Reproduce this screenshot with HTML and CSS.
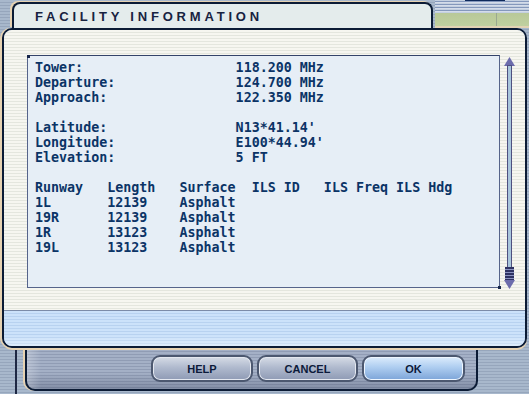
FILE: index.html
```html
<!DOCTYPE html>
<html lang="en">
<head>
  <meta charset="UTF-8" />
  <title>Facility Information</title>
  <link rel="stylesheet" href="styles.css">
</head>
<body>
  <div class="screen">

    <!-- Title tab and scenery behind it -->
    <div class="top">
      <div class="tab">
        <h1 class="tab-title">FACILITY INFORMATION</h1>
      </div>
      <div class="scenery"></div>
    </div>

    <!-- Main dialog -->
    <section class="dialog">
      <div class="content">
        <div class="info-box">
<pre class="info">Tower:                   118.200 MHz
Departure:               124.700 MHz
Approach:                122.350 MHz

Latitude:                N13*41.14'
Longitude:               E100*44.94'
Elevation:               5 FT

Runway   Length   Surface  ILS ID   ILS Freq ILS Hdg
1L       12139    Asphalt
19R      12139    Asphalt
1R       13123    Asphalt
19L      13123    Asphalt</pre>
        </div>
        <svg class="scroll" width="14" height="232" viewBox="0 0 14 232">
          <polygon points="1,9 6.5,0 12,9" fill="#6c6cac" />
          <rect x="4.5" y="8.5" width="4" height="202" fill="#a9c6dc" stroke="#4e5080" />
          <rect x="2" y="210" width="9" height="13" fill="#2e3262" />
          <g stroke="#8a92c0" stroke-width="1">
            <line x1="2" y1="212.5" x2="11" y2="212.5" />
            <line x1="2" y1="215.5" x2="11" y2="215.5" />
            <line x1="2" y1="218.5" x2="11" y2="218.5" />
            <line x1="2" y1="221.5" x2="11" y2="221.5" />
          </g>
          <polygon points="1,223 12,223 6.5,232" fill="#6c6cac" />
        </svg>
      </div>
      <div class="band"></div>
    </section>

    <!-- Button bar -->
    <div class="footer">
      <button class="btn btn-help">HELP</button>
      <button class="btn btn-cancel">CANCEL</button>
      <button class="btn btn-ok">OK</button>
    </div>

  </div>
</body>
</html>
```
FILE: styles.css
```css
body {
  margin: 0;
  background: #a4b4c8;
}

.screen {
  width: 529px;
  height: 394px;
  overflow: hidden;
  background:
    linear-gradient(to right, transparent 15px, #1e2844 15px, #1e2844 17px, transparent 17px) 0 348px / 100% 46px no-repeat,
    repeating-linear-gradient(#a8b8cc 0, #a8b8cc 2px, #96a6bc 2px, #96a6bc 3px);
}

/* Top row */
.top {
  display: flex;
  height: 28px;
}

.tab {
  box-sizing: border-box;
  width: 421px;
  margin: 2px 0 0 12px;
  border: 2px solid #0b1b35;
  border-bottom: none;
  border-radius: 8px 8px 0 0;
  background: #e4ecec;
  box-shadow: -2px -1px 0 #e6d2b2;
}

.tab-title {
  margin: 0;
  padding-left: 21px;
  font-family: "Liberation Sans", Arial, sans-serif;
  font-size: 13px;
  font-weight: bold;
  line-height: 25px;
  letter-spacing: 3.8px;
  color: #172240;
}

.scenery {
  flex: 1;
  margin-left: 2px;
  background:
    linear-gradient(#0e2a5c, #0e2a5c) 30px 0 / 40px 1px no-repeat,
    linear-gradient(to right, transparent 61px, #9aa890 61px, #9aa890 62px, transparent 62px) 0 13px / 100% 13px no-repeat,
    linear-gradient(#b8c898, #c0d0a0) 0 13px / 100% 13px no-repeat,
    linear-gradient(#e2d2b4, #e2d2b4) 0 26px / 100% 2px no-repeat,
    repeating-linear-gradient(#c4d0e0 0, #c4d0e0 1px, #8498bc 1px, #8498bc 2px, #d4dcea 2px, #d4dcea 3px);
}

/* Dialog */
.dialog {
  position: relative;
  z-index: 1;
  box-sizing: border-box;
  width: 525px;
  height: 320px;
  margin-left: 2px;
  display: flex;
  flex-direction: column;
  border: 2px solid #0b1b35;
  border-radius: 10px;
  overflow: hidden;
  box-shadow: -2px 0 0 #e6d2b2, 0 2px 0 #e6d2b2;
}

.content {
  display: flex;
  align-items: flex-start;
  gap: 3px;
  height: 280px;
  box-sizing: border-box;
  padding: 25px 0 0 23px;
  background: repeating-linear-gradient(#f6f6f0 0, #f6f6f0 2px, #e4e6de 2px, #e4e6de 3px);
}

.info-box {
  position: relative;
  box-sizing: border-box;
  width: 473px;
  height: 233px;
  border: 1px solid #56648a;
  border-top-color: #34446a;
  background: #e6eef6;
  padding: 4px 0 0 7px;
}

.info-box::before,
.info-box::after {
  content: "";
  position: absolute;
  width: 3px;
  height: 3px;
  background: #16264a;
}

.info-box::before {
  left: -1px;
  top: -1px;
}

.info-box::after {
  right: -2px;
  bottom: -2px;
}

.info {
  margin: 0;
  font-family: "DejaVu Sans Mono", "Liberation Mono", monospace;
  font-size: 13.33px;
  font-weight: bold;
  line-height: 15px;
  color: #0b3466;
}

.scroll {
  display: block;
  margin-top: 2px;
}

.band {
  flex: 1;
  border-top: 1px solid #7c8ca8;
  background:
    linear-gradient(transparent 70%, rgba(255, 255, 255, 0.35)),
    repeating-linear-gradient(#cce2fa 0, #cce2fa 2px, #b8d2f0 2px, #b8d2f0 3px);
}

/* Footer with buttons */
.footer {
  box-sizing: border-box;
  width: 453px;
  height: 57px;
  margin: -14px 0 0 25px;
  display: flex;
  justify-content: flex-end;
  align-items: flex-end;
  gap: 4px;
  padding: 0 11px 7px 0;
  border: 2px solid #0b1b35;
  border-top: none;
  border-radius: 0 0 10px 10px;
  background:
    linear-gradient(to right, rgba(255, 255, 255, 0.25), transparent 14px),
    linear-gradient(transparent 70%, rgba(30, 40, 70, 0.25)),
    repeating-linear-gradient(#a4b0c6 0, #a4b0c6 2px, #909cb4 2px, #909cb4 3px);
  box-shadow: -2px 0 0 #e6d2b2;
}

.btn {
  height: 27px;
  border: 2px solid #4c5870;
  border-radius: 9px;
  font-family: "Liberation Sans", Arial, sans-serif;
  font-size: 11px;
  font-weight: bold;
  color: #0c1a3a;
  background: linear-gradient(#d6dce6, #b0bace 45%, #8e9ab4);
  box-shadow: inset 0 0 0 1px #e4e8f0;
  padding: 0;
  cursor: pointer;
}

.btn-help {
  width: 102px;
}

.btn-cancel {
  width: 101px;
}

.btn-ok {
  width: 103px;
  background: linear-gradient(#dcecfc, #aecdf0 45%, #7ca4d8);
  box-shadow: inset 0 0 0 1px #eef6ff;
}
```
